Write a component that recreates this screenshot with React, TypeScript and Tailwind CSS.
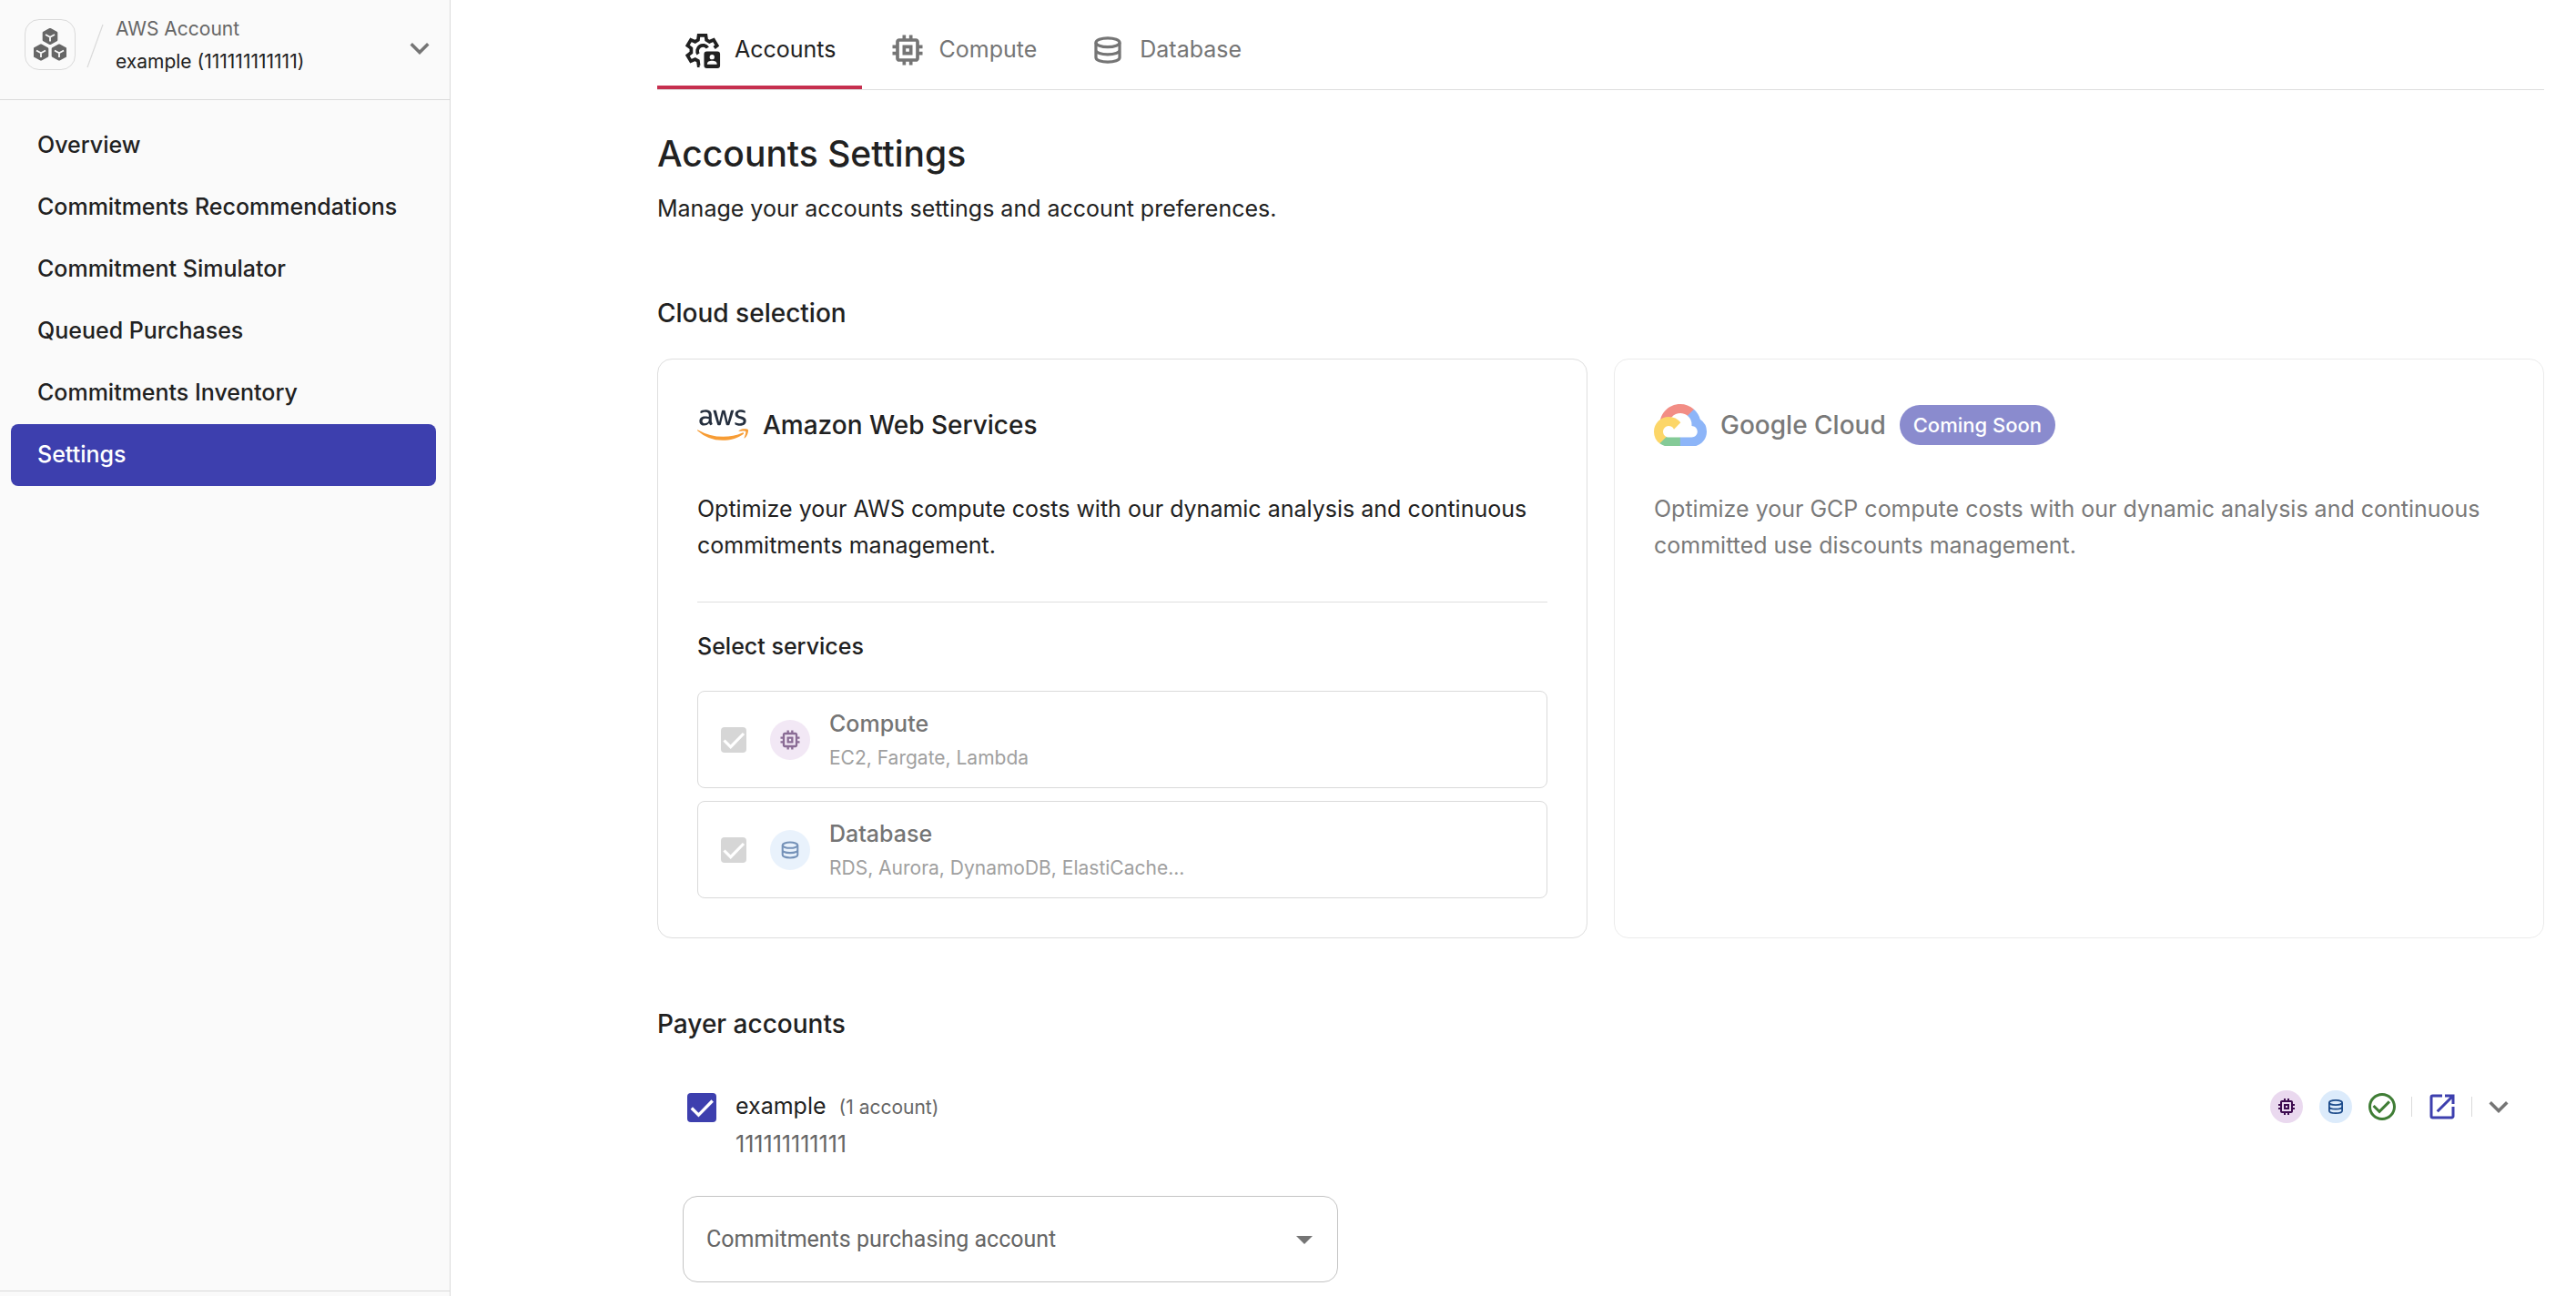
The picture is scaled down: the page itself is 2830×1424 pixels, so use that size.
import React, { useState } from "react";
import {
  MdCheckCircleOutline,
  MdKeyboardArrowDown,
  MdMemory,
  MdOpenInNew,
} from "react-icons/md";
import { FaAws } from "react-icons/fa";

const navItems = [
  "Overview",
  "Commitments Recommendations",
  "Commitment Simulator",
  "Queued Purchases",
  "Commitments Inventory",
  "Settings",
];

type IconProps = { className?: string };

const CubesIcon = ({ className }: IconProps) => (
  <svg viewBox="0 0 36 36" className={className} aria-hidden="true">
    {[[18, 9], [8, 26.5], [28, 26.5]].map(([x, y]) => (
      <g key={`${x}-${y}`} transform={`translate(${x} ${y})`}>
        <path
          d="M0 -7.6L6.8 -4V4L0 7.6L-6.8 4V-4Z"
          fill="currentColor"
          stroke="currentColor"
          strokeWidth="3"
          strokeLinejoin="round"
        />
        <path d="M-5 -2L0 0.800L5 -2M0 0.800V5.600" fill="none" stroke="#fafafa" strokeWidth="1.8" />
      </g>
    ))}
  </svg>
);

const AccountsIcon = ({ className }: IconProps) => (
  <svg viewBox="-3 -3 45 45" className={className} aria-hidden="true">
    <path
      d="M16 37H15L14.3 31.8L11 29.9L6.2 32L2.4 25.6L6.6 22.4V17.6L2.4 14.4L6.2 8L11 10.1L14.3 8.2L15 3H23L23.7 8.2L27 10.1L31.8 8L35.6 14.4L32.4 17"
      fill="none"
      stroke="currentColor"
      strokeWidth="3.8"
    />
    <path d="M14.500 24A6.300 6.300 0 1 1 25 17" fill="none" stroke="currentColor" strokeWidth="3.8" />
    <rect x="21" y="21" width="18" height="19" rx="3" fill="currentColor" />
    <circle cx="30" cy="27.4" r="2.700" fill="#fff" />
    <path d="M24.500 35.500C24.500 32.500 27 31.600 30 31.600S35.500 32.500 35.500 35.500Z" fill="#fff" />
  </svg>
);

const DatabaseIcon = ({ className }: IconProps) => (
  <svg viewBox="-1 -1 26 26" className={className} fill="none" stroke="currentColor" strokeWidth="1.9" aria-hidden="true">
    <ellipse cx="12" cy="7.1" rx="7.700" ry="2.900" />
    <path d="M4.300 7.100V16.900C4.300 18.600 7.700 19.800 12 19.800S19.700 18.600 19.700 16.900V7.100M4.300 12C4.300 13.700 7.700 14.900 12 14.900S19.700 13.700 19.700 12" />
  </svg>
);

// smile and arrow under the AWS letters come from the icon's second half
const AwsLogo = () => (
  <span className="relative block h-10 w-14 shrink-0">
    <FaAws className="absolute -top-2 left-0 size-14 text-[#252f3e] [clip-path:inset(0_0_44%_0)]" aria-hidden="true" />
    <FaAws className="absolute -top-2 left-0 size-14 text-[#f79c34] [clip-path:inset(56%_0_0_0)]" aria-hidden="true" />
  </span>
);

const GoogleCloudLogo = () => (
  <svg viewBox="0 0 256 206" className="w-[58px] shrink-0" aria-hidden="true">
    <path fill="#EA4335" d="M170.252 56.819l22.253-22.253 1.483-9.370C153.437-11.677 88.976-7.496 52.420 33.920 42.267 45.423 34.734 59.764 30.717 74.573l7.970-1.123 44.505-7.340 3.436-3.513c19.797-21.742 53.270-24.667 76.128-6.168l7.496.390z" />
    <path fill="#4285F4" d="M224.205 73.918a100.249 100.249 0 0 0-30.217-48.722l-31.232 31.232a55.515 55.515 0 0 1 20.379 44.037v5.544c15.350 0 27.797 12.450 27.797 27.796 0 15.352-12.446 27.573-27.797 27.573h-55.671l-5.466 5.934v33.340l5.466 5.231h55.671c39.930.310 72.553-31.494 72.864-71.424a72.303 72.303 0 0 0-31.794-60.541" />
    <path fill="#34A853" d="M71.870 205.796h55.593V161.290H71.870a27.275 27.275 0 0 1-11.470-2.500l-7.887 2.420-22.409 22.253-1.952 7.574c12.567 9.489 27.900 14.825 43.647 14.759" />
    <path fill="#FBBC05" d="M71.870 61.425C31.940 61.663-.237 94.228.001 134.158a72.301 72.301 0 0 0 28.222 56.880l32.248-32.246c-13.990-6.322-20.208-22.786-13.887-36.776 6.320-13.990 22.786-20.208 36.775-13.888a27.796 27.796 0 0 1 13.887 13.888l32.248-32.248A72.224 72.224 0 0 0 71.870 61.425" />
  </svg>
);

const CheckMark = ({ className }: IconProps) => (
  <svg viewBox="0 0 18 18" className={className} aria-hidden="true">
    <path d="M2.700 9.300L7 13.600L15.600 4.800" fill="none" stroke="#fff" strokeWidth="1.9" />
  </svg>
);

const tabs = [
  { name: "Accounts", icon: <AccountsIcon className="size-11" /> },
  { name: "Compute", icon: <MdMemory className="size-11" aria-hidden="true" /> },
  { name: "Database", icon: <DatabaseIcon className="size-11" /> },
];

const services = [
  {
    id: "compute",
    name: "Compute",
    detail: "EC2, Fargate, Lambda",
    badge: "bg-[#ead9ef] text-[#3d0b4f]",
    icon: <MdMemory className="size-7" aria-hidden="true" />,
  },
  {
    id: "database",
    name: "Database",
    detail: "RDS, Aurora, DynamoDB, ElastiCache...",
    badge: "bg-[#dcebfb] text-[#1b4a8a]",
    icon: <DatabaseIcon className="size-7" />,
  },
];

const Sidebar = () => (
  <aside className="flex w-[495px] shrink-0 flex-col border-r border-[#dadada] bg-[#fafafa]">
    <button type="button" className="flex h-[110px] shrink-0 items-start border-b border-[#dadada] pt-[14px] pr-3 pl-[27px] text-left">
      <span className="mt-[7px] flex size-14 items-center justify-center rounded-2xl border border-[#dadada] text-[#666]">
        <CubesIcon className="size-9" />
      </span>
      <svg viewBox="0 0 20 50" className="mt-[11px] ml-3 h-[50px] w-5" aria-hidden="true">
        <path d="M1 49L18 2" stroke="#dadada" strokeWidth="1.2" />
      </svg>
      <span className="ml-3 flex-1 text-[21px] leading-9 text-[#212121]">
        <span className="block text-[#666]">AWS Account</span>
        <span className="block">example (111111111111)</span>
      </span>
      <MdKeyboardArrowDown className="mt-[18px] size-[42px] text-[#757575]" aria-hidden="true" />
    </button>

    <nav className="flex flex-1 flex-col pt-4 pr-[15px] pl-3">
      {navItems.map((item) => (
        <a
          key={item}
          href="#"
          className={
            item === "Settings"
              ? "flex h-[68px] items-center rounded-lg bg-[#3d3fae] px-[29px] text-[25px] font-medium text-white"
              : "flex h-[68px] items-center rounded-lg px-[29px] text-[25px] font-medium text-[#212121]"
          }
        >
          {item}
        </a>
      ))}
    </nav>
    <div className="h-[6px] border-t border-[#dadada]" />
  </aside>
);

const Tabs = () => {
  const [active, setActive] = useState("Accounts");

  return (
    <div role="tablist" className="flex border-b border-[#dedede]">
      {tabs.map((tab) => (
        <button
          key={tab.name}
          type="button"
          role="tab"
          aria-selected={active === tab.name}
          onClick={() => setActive(tab.name)}
          className={
            active === tab.name
              ? "flex h-[98px] items-center gap-[13px] border-b-4 border-[#c62f4f] px-7 pt-4 text-[25px] text-[#212121]"
              : "flex h-[98px] items-center gap-[13px] border-b-4 border-transparent px-7 pt-4 text-[25px] text-[#757575]"
          }
        >
          {tab.icon}
          {tab.name}
        </button>
      ))}
    </div>
  );
};

const CloudSelection = () => (
  <section className="grid grid-cols-2 gap-[29px]">
    <div className="rounded-2xl border border-[#dedede] px-[43px] pt-12 pb-[43px]">
      <div className="flex h-12 items-center gap-4">
        <AwsLogo />
        <h3 className="text-[28px] font-medium">Amazon Web Services</h3>
      </div>
      <p className="mt-12 text-[25px] leading-10">
        Optimize your AWS compute costs with our dynamic analysis and continuous commitments management.
      </p>
      <hr className="mt-[42px] border-[#dedede]" />
      <h4 className="mt-7 text-[25px] leading-10 font-medium">Select services</h4>
      <div className="mt-[29px] flex flex-col gap-[14px]">
        {services.map((service) => (
          <label
            key={service.id}
            htmlFor={service.id}
            className="flex h-[107px] items-center rounded-lg border border-[#dadada] px-[23px]"
          >
            <span className="relative mr-6 size-8 shrink-0">
              <input
                id={service.id}
                type="checkbox"
                defaultChecked
                disabled
                className="m-[2px] block size-7 appearance-none rounded-sm bg-[#d6d6d6]"
              />
              <CheckMark className="pointer-events-none absolute top-[1px] left-[1px] size-[30px]" />
            </span>
            <span className={`mr-[21px] flex size-11 shrink-0 items-center justify-center rounded-full opacity-60 ${service.badge}`}>
              {service.icon}
            </span>
            <span>
              <span className="block text-[25px] leading-10 font-medium text-[#757575]">{service.name}</span>
              <span className="block text-[21px] leading-9 text-[#a0a0a0]">{service.detail}</span>
            </span>
          </label>
        ))}
      </div>
    </div>

    <div className="rounded-2xl border border-[#dedede] px-[43px] pt-12 pb-[43px] opacity-60">
      <div className="flex h-12 items-center gap-[15px]">
        <GoogleCloudLogo />
        <h3 className="text-[28px] font-medium">Google Cloud</h3>
        <span className="flex h-11 items-center rounded-full bg-[#3d3fae] px-[15px] text-[22px] font-medium text-white">
          Coming Soon
        </span>
      </div>
      <p className="mt-12 text-[25px] leading-10">
        Optimize your GCP compute costs with our dynamic analysis and continuous committed use discounts management.
      </p>
    </div>
  </section>
);

const PayerAccounts = () => {
  const [checked, setChecked] = useState(true);

  return (
    <section>
      <h2 className="mt-[74px] text-[28px] leading-10 font-medium">Payer accounts</h2>
      <div className="mt-[42px] flex items-start pr-[29px] pl-[33px]">
        <span className="relative mt-[14px] mr-[21px] size-8 shrink-0">
          <input
            id="payer"
            type="checkbox"
            checked={checked}
            onChange={(e) => setChecked(e.target.checked)}
            className="block size-8 appearance-none rounded-sm bg-[#d6d6d6] checked:bg-[#3d3fae]"
          />
          <CheckMark className="pointer-events-none absolute top-0 left-0 size-8" />
        </span>
        <label htmlFor="payer" className="flex-1 pt-2 text-[25px] leading-10">
          <span className="flex items-baseline gap-[14px]">
            example
            <span className="text-[21px] text-[#666]">(1 account)</span>
          </span>
          <span className="block text-[#666]">111111111111</span>
        </label>
        <div className="flex items-center pt-2">
          <span className="flex size-9 items-center justify-center rounded-full bg-[#ead9ef] text-[#3d0b4f]">
            <MdMemory className="size-6" aria-hidden="true" />
          </span>
          <span className="ml-[18px] flex size-9 items-center justify-center rounded-full bg-[#dcebfb] text-[#1b4a8a]">
            <DatabaseIcon className="size-6" />
          </span>
          <MdCheckCircleOutline className="ml-[15px] size-9 text-[#3f7d35]" aria-label="Connected" />
          <span className="ml-[14px] h-[22px] w-px bg-[#dadada]" />
          <button type="button" aria-label="Open account" className="ml-[15px] text-[#3d3fae]">
            <MdOpenInNew className="size-9" />
          </button>
          <span className="ml-[14px] h-[22px] w-px bg-[#dadada]" />
          <button type="button" aria-label="Expand account" className="ml-2 text-[#757575]">
            <MdKeyboardArrowDown className="size-[42px]" />
          </button>
        </div>
      </div>
      <div className="relative mt-[37px] ml-7 w-[720px]">
        <select
          aria-label="Commitments purchasing account"
          className="block h-[95px] w-full appearance-none rounded-2xl border border-[#c4c4c4] bg-white px-[25px] font-[Roboto,sans-serif] text-[25px] text-[#666]"
        >
          <option>Commitments purchasing account</option>
        </select>
        <svg viewBox="0 0 18 9" className="pointer-events-none absolute top-11 right-7 h-[9px] w-[18px] text-[#757575]" aria-hidden="true">
          <path d="M0 0H18L9 9Z" fill="currentColor" />
        </svg>
      </div>
    </section>
  );
};

const App = () => (
  <div className="flex min-h-screen bg-white font-['Inter',sans-serif] text-[#212121]">
    <Sidebar />
    <main className="min-w-0 flex-1 pr-[35px] pl-[227px]">
      <Tabs />
      <h1 className="mt-11 text-[39px] leading-[52px] font-medium">Accounts Settings</h1>
      <p className="mt-[14px] text-[25px] leading-10">Manage your accounts settings and account preferences.</p>
      <h2 className="mt-[75px] mb-[30px] text-[28px] leading-10 font-medium">Cloud selection</h2>
      <CloudSelection />
      <PayerAccounts />
    </main>
  </div>
);

export default App;
